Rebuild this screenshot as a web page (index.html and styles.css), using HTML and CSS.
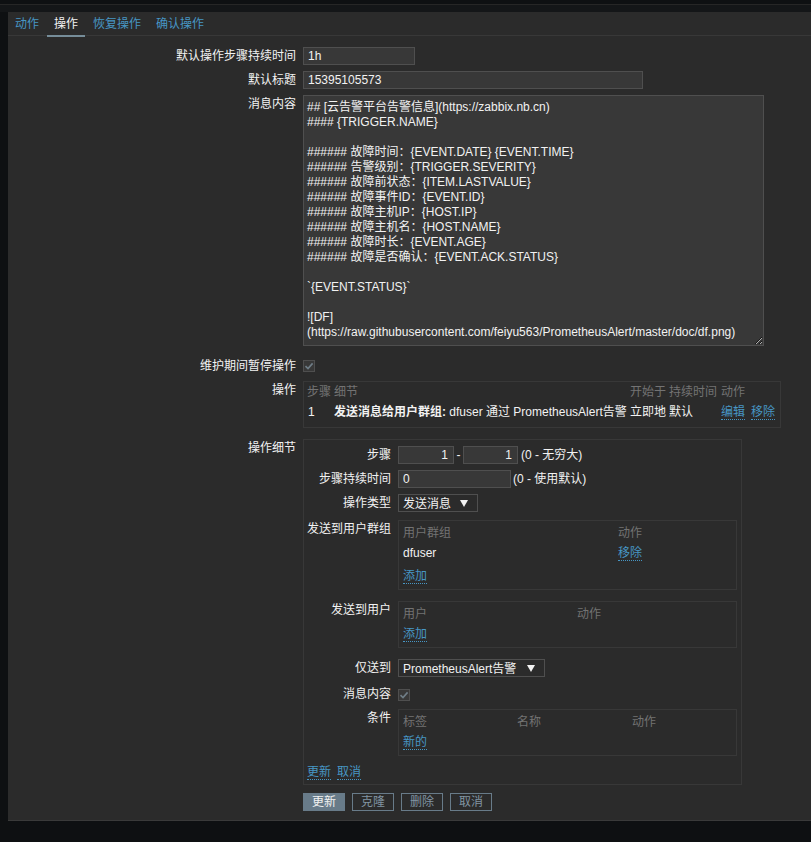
FILE: index.html
```html
<!DOCTYPE html>
<html lang="zh-CN">
<head>
<meta charset="utf-8">
<title>操作</title>
<link rel="stylesheet" href="styles.css">
</head>
<body>
<div class="topbar"></div>
<main class="panel">
  <nav class="tabs">
    <a class="tab">动作</a>
    <a class="tab active">操作</a>
    <a class="tab">恢复操作</a>
    <a class="tab">确认操作</a>
  </nav>
  <form class="form">
    <div class="row">
      <label class="lbl">默认操作步骤持续时间</label>
      <input class="input w112" value="1h">
    </div>
    <div class="row gap6">
      <label class="lbl">默认标题</label>
      <input class="input w340" value="15395105573">
    </div>
    <div class="row gap6">
      <label class="lbl">消息内容</label>
      <textarea class="ta" readonly>## [云告警平台告警信息](https://zabbix.nb.cn)
#### {TRIGGER.NAME}

###### 故障时间：{EVENT.DATE} {EVENT.TIME}
###### 告警级别：{TRIGGER.SEVERITY}
###### 故障前状态：{ITEM.LASTVALUE}
###### 故障事件ID：{EVENT.ID}
###### 故障主机IP：{HOST.IP}
###### 故障主机名：{HOST.NAME}
###### 故障时长：{EVENT.AGE}
###### 故障是否确认：{EVENT.ACK.STATUS}

`{EVENT.STATUS}`

![DF](https://raw.githubusercontent.com/feiyu563/PrometheusAlert/master/doc/df.png)</textarea>
    </div>
    <div class="row gap11">
      <label class="lbl">维护期间暂停操作</label>
      <span class="cb"><svg width="10" height="10" viewBox="0 0 10 10"><path d="M1.5 5.2 L4 7.6 L8.6 2.4" fill="none" stroke="#6f7d87" stroke-width="1.6"/></svg></span>
    </div>
    <div class="row gap6">
      <label class="lbl">操作</label>
      <div class="opbox">
        <table class="optable">
          <colgroup><col class="c-step"><col><col class="c-start"><col class="c-dur"><col class="c-act"></colgroup>
          <thead>
            <tr><th>步骤</th><th>细节</th><th>开始于</th><th>持续时间</th><th>动作</th></tr>
          </thead>
          <tbody>
            <tr>
              <td>1</td>
              <td><b>发送消息给用户群组:</b> dfuser 通过 PrometheusAlert告警</td>
              <td>立即地</td>
              <td>默认</td>
              <td><span class="acts"><a class="lnk">编辑</a><a class="lnk">移除</a></span></td>
            </tr>
          </tbody>
        </table>
      </div>
    </div>
    <div class="row gap11">
      <label class="lbl">操作细节</label>
      <div class="dbox">
        <div class="drow">
          <label class="dlbl">步骤</label>
          <div class="inline">
            <input class="input w56 right" value="1">
            <span class="dash">-</span>
            <input class="input w55 right" value="1">
            <span class="hint">(0 - 无穷大)</span>
          </div>
        </div>
        <div class="drow gap6">
          <label class="dlbl">步骤持续时间</label>
          <div class="inline">
            <input class="input w113" value="0">
            <span class="hint2">(0 - 使用默认)</span>
          </div>
        </div>
        <div class="drow gap6">
          <label class="dlbl">操作类型</label>
          <div class="sel w80"><span class="seltext">发送消息</span><svg class="arrow" width="8" height="7" viewBox="0 0 8 7"><path d="M0 0 H8 L4 7 Z" fill="#f2f2f2"/></svg></div>
        </div>
        <div class="drow gap8">
          <label class="dlbl">发送到用户群组</label>
          <div class="sub">
            <div class="subrow hdr cols-g"><span>用户群组</span><span>动作</span></div>
            <div class="subrow cols-g"><span>dfuser</span><span><a class="lnk">移除</a></span></div>
            <div class="subrow addrow"><a class="lnk">添加</a></div>
          </div>
        </div>
        <div class="drow gap11">
          <label class="dlbl">发送到用户</label>
          <div class="sub">
            <div class="subrow hdr cols-u"><span>用户</span><span>动作</span></div>
            <div class="subrow"><a class="lnk">添加</a></div>
          </div>
        </div>
        <div class="drow gap11">
          <label class="dlbl">仅送到</label>
          <div class="sel w147"><span class="seltext">PrometheusAlert告警</span><svg class="arrow" width="8" height="7" viewBox="0 0 8 7"><path d="M0 0 H8 L4 7 Z" fill="#f2f2f2"/></svg></div>
        </div>
        <div class="drow gap8">
          <label class="dlbl">消息内容</label>
          <span class="cb cb-d"><svg width="10" height="10" viewBox="0 0 10 10"><path d="M1.5 5.2 L4 7.6 L8.6 2.4" fill="none" stroke="#6f7d87" stroke-width="1.6"/></svg></span>
        </div>
        <div class="drow gap6">
          <label class="dlbl">条件</label>
          <div class="sub">
            <div class="subrow hdr cols-c"><span>标签</span><span>名称</span><span>动作</span></div>
            <div class="subrow"><a class="lnk">新的</a></div>
          </div>
        </div>
        <div class="linkrow">
          <a class="lnk">更新</a><a class="lnk">取消</a>
        </div>
      </div>
    </div>
    <div class="row buttons">
      <span class="lbl"></span>
      <div class="btns">
        <button type="button" class="btn primary">更新</button>
        <button type="button" class="btn">克隆</button>
        <button type="button" class="btn">删除</button>
        <button type="button" class="btn">取消</button>
      </div>
    </div>
  </form>
</main>
</body>
</html>
```

FILE: styles.css
```css
* { box-sizing: border-box; }

html, body { margin: 0; }

body {
  background: #0e1012;
  color: #f2f2f2;
  font-family: "Liberation Sans", Arial, "Noto Sans CJK SC", sans-serif;
  font-size: 12px;
  line-height: 18px;
  overflow: hidden;
}

a { color: #4796c4; text-decoration: none; cursor: pointer; }

.topbar {
  height: 12px;
  border-top: 4px solid #0e1012;
  background: linear-gradient(#262626 0 1px, #141618 1px);
}

.panel {
  margin-left: 8px;
  background: #2b2b2b;
  border-bottom: 1px solid #3a3a3a;
  padding-bottom: 9px;
}

/* tabs */
.tabs {
  display: flex;
  align-items: flex-start;
  height: 24px;
  border-bottom: 1px solid #383838;
}
.tab {
  padding: 0 7px;
  margin-right: 1px;
  line-height: 24px;
  height: 23px;
  color: #4796c4;
}
.tab.active {
  color: #f2f2f2;
  height: 25px;
  border-bottom: 2px solid #768d99;
}

/* form */
.form { padding-top: 11px; }

.row {
  display: flex;
  align-items: flex-start;
  column-gap: 7px;
}
.gap6 { margin-top: 6px; }
.gap8 { margin-top: 8px; }
.gap11 { margin-top: 11px; }

.lbl {
  flex: none;
  width: 288px;
  text-align: right;
  line-height: 18px;
  white-space: nowrap;
}

.input {
  height: 18px;
  border: 1px solid #4f4f4f;
  background: #383838;
  color: #f2f2f2;
  font: inherit;
  line-height: 16px;
  padding: 0 4px;
  margin: 0;
  outline: none;
}
.input.right { text-align: right; padding-right: 5px; }
.w112 { width: 112px; }
.w340 { width: 340px; }
.w56 { width: 56px; }
.w55 { width: 55px; }
.w113 { width: 113px; }

.ta {
  display: block;
  width: 461px;
  height: 251px;
  margin: 0;
  background: #383838;
  border: 1px solid #4f4f4f;
  color: #f2f2f2;
  font: inherit;
  line-height: 15px;
  padding: 4px 3px;
  overflow: hidden;
  resize: both;
  outline: none;
}

.cb {
  flex: none;
  width: 12px;
  height: 12px;
  margin-top: 3px;
  border: 1px solid #4f4f4f;
  background: #383838;
  display: flex;
  align-items: center;
  justify-content: center;
}
.cb-d { margin-top: 4px; }

/* operations table */
.opbox {
  width: 478px;
  border: 1px solid #383838;
  padding: 0 3px 5px;
}
.optable {
  width: 100%;
  border-collapse: collapse;
  table-layout: fixed;
}
.c-step { width: 27px; }
.c-start { width: 38px; }
.c-dur { width: 53px; }
.c-act { width: 56px; }
.optable th, .optable td {
  padding: 0;
  height: 20px;
  line-height: 20px;
  text-align: left;
  white-space: nowrap;
  vertical-align: middle;
}
.optable th { font-weight: normal; color: #737373; }
.optable td:first-child { padding-left: 1px; }
.optable th:nth-child(4), .optable td:nth-child(4) { padding-left: 1px; }
.acts { display: inline-flex; gap: 6px; align-items: center; }

.lnk {
  display: inline-block;
  line-height: 14px;
  border-bottom: 1px dotted #4796c4;
  color: #4796c4;
}

/* details box */
.dbox {
  width: 439px;
  border: 1px solid #383838;
  padding: 6px 3px 3px;
}
.drow {
  display: flex;
  align-items: flex-start;
  column-gap: 7px;
}
.dlbl {
  flex: none;
  width: 84px;
  text-align: right;
  line-height: 18px;
  white-space: nowrap;
}
.inline {
  display: flex;
  align-items: center;
  height: 18px;
  white-space: nowrap;
}
.dash { margin: 0 2px; width: 5px; text-align: center; }
.hint { margin-left: 3px; }
.hint2 { margin-left: 2px; }

.sel {
  display: flex;
  align-items: flex-start;
  height: 18px;
  border: 1px solid #4f4f4f;
  background: #2b2b2b;
  padding: 0 9px 0 4px;
  overflow: hidden;
  white-space: nowrap;
}
.seltext { padding-top: 1px; line-height: 17px; }
.arrow { align-self: center; margin-left: auto; flex: none; }
.w80 { width: 80px; }
.w147 { width: 147px; }

.sub {
  width: 339px;
  border: 1px solid #383838;
  padding: 2px 4px 3px;
}
.subrow {
  height: 20px;
  display: flex;
  align-items: center;
}
.subrow.hdr { color: #737373; }
.cols-g, .cols-u, .cols-c { display: grid; align-items: center; }
.cols-g { grid-template-columns: 215px 1fr; }
.cols-u { grid-template-columns: 174px 1fr; }
.cols-c { grid-template-columns: 114px 115px 1fr; }
.addrow { margin-top: 3px; }

.linkrow {
  margin-top: 7px;
  height: 18px;
  display: flex;
  align-items: center;
  gap: 6px;
}

/* buttons */
.buttons { margin-top: 8px; }
.btns { display: flex; gap: 7px; }
.btn {
  width: 42px;
  height: 18px;
  padding: 0;
  margin: 0;
  border: 1px solid #687b89;
  background: transparent;
  color: #8194a2;
  font: inherit;
  line-height: 16px;
}
.btn.primary {
  background: #687b89;
  color: #f2f2f2;
}
```
